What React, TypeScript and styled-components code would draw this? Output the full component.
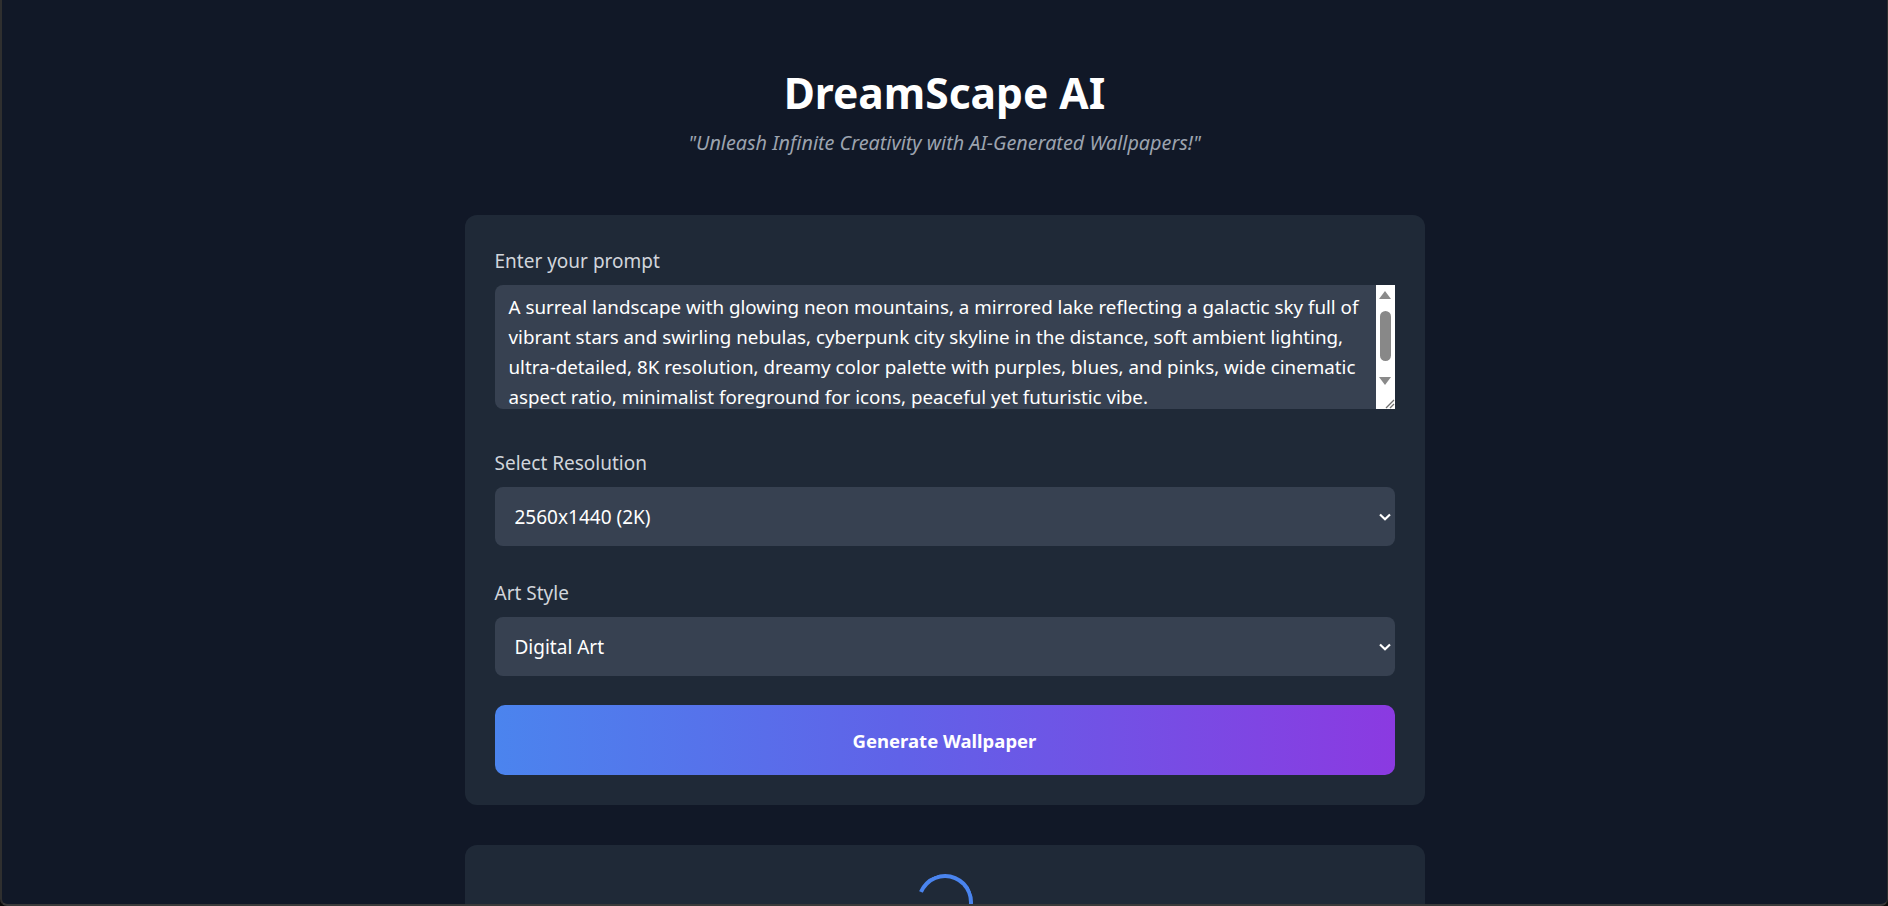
import React, { useEffect, useRef, useState } from "react";
import styled, { createGlobalStyle } from "styled-components";

const GlobalStyle = createGlobalStyle`
  html, body {
    margin: 0;
    padding: 0;
    background: #0b0b0b;
  }
  * { box-sizing: border-box; }
  body {
    font-family: "Noto Sans", "Open Sans", sans-serif;
    overflow: hidden;
  }
`;

const Frame = styled.div`
  height: 100vh;
  border-left: 2px solid #2f2f2f;
  border-right: 1px solid #2f2f2f;
  border-bottom: 2px solid #3a3a3a;
  border-bottom-left-radius: 7px;
  border-bottom-right-radius: 7px;
  background: #111827;
  overflow: hidden;
`;

const Page = styled.main`
  display: flex;
  flex-direction: column;
  align-items: center;
  padding-top: 67px;
`;

const Title = styled.h1`
  margin: 0;
  font-size: 42.5px;
  line-height: 52px;
  font-weight: 700;
  color: #ffffff;
`;

const Tagline = styled.p`
  margin: 10px 0 0;
  font-size: 19.8px;
  line-height: 28px;
  font-style: italic;
  color: #9ca3af;
`;

const Card = styled.section<{ $top: number; $minHeight?: number }>`
  width: 960px;
  margin-top: ${(p) => p.$top}px;
  background: #1f2937;
  border-radius: 12px;
  padding: 32px 30px 30px;
  min-height: ${(p) => (p.$minHeight ? `${p.$minHeight}px` : "auto")};
`;

const LoaderCard = styled(Card)`
  padding-top: 29px;
  display: flex;
  justify-content: center;
`;

const Field = styled.div<{ $gap: number }>`
  display: flex;
  flex-direction: column;
  margin-bottom: ${(p) => p.$gap}px;
`;

const Label = styled.label`
  font-size: 19px;
  line-height: 28px;
  color: #d1d5db;
  margin-bottom: 10px;
`;

const PromptWrap = styled.div`
  position: relative;
  width: 100%;
  height: 124px;
`;

const PromptBox = styled.textarea`
  display: block;
  width: 100%;
  height: 100%;
  padding: 12px 26px 12px 14px;
  background: #374151;
  color: #ffffff;
  border: none;
  outline: none;
  border-radius: 8px;
  font-family: "Noto Sans", "Open Sans", sans-serif;
  font-size: 18.8px;
  line-height: 30px;
  resize: none;
  overflow: hidden;
`;

const ScrollBar = styled.div`
  position: absolute;
  top: 0;
  right: 0;
  bottom: 0;
  width: 19px;
  background: #ffffff;
  display: flex;
  flex-direction: column;
  align-items: center;
  pointer-events: none;
`;

const ArrowSlot = styled.div<{ $h: number }>`
  height: ${(p) => p.$h}px;
  width: 100%;
  display: flex;
  align-items: center;
  justify-content: center;
  flex: none;
`;

const Track = styled.div`
  flex: 1;
  width: 100%;
  display: flex;
  justify-content: center;
`;

const Thumb = styled.div`
  margin-top: 6px;
  width: 11px;
  height: 50px;
  border-radius: 6px;
  background: #888888;
`;

const Resizer = styled.div`
  margin-top: 3px;
  height: 17px;
  width: 100%;
  display: flex;
  align-items: flex-end;
  justify-content: flex-end;
  flex: none;
`;

const SelectWrap = styled.div`
  position: relative;
  width: 100%;
`;

const Select = styled.select`
  display: block;
  width: 100%;
  height: 59px;
  padding: 0 40px 0 20px;
  appearance: none;
  -webkit-appearance: none;
  background: #374151;
  color: #ffffff;
  border: none;
  outline: none;
  border-radius: 8px;
  font-family: "Noto Sans", "Open Sans", sans-serif;
  font-size: 19px;
`;

const Chevron = styled.svg`
  position: absolute;
  right: 3px;
  top: 50%;
  transform: translateY(-50%);
  pointer-events: none;
`;

const GenerateButton = styled.button`
  display: block;
  width: 100%;
  height: 70px;
  border: none;
  border-radius: 10px;
  background: linear-gradient(90deg, #4b84ee 0%, #6062e8 45%, #8b3ae1 100%);
  color: #ffffff;
  font-family: "Noto Sans", "Open Sans", sans-serif;
  font-size: 18.5px;
  font-weight: 700;
  cursor: pointer;
`;

const Spinner = styled.div`
  width: 56px;
  height: 56px;
  border-radius: 50%;
  border: 4px solid #4a84ee;
  border-left-color: transparent;
  transform: rotate(-22deg);
`;

const resolutions = ["1920x1080 (Full HD)", "2560x1440 (2K)", "3840x2160 (4K)"];

const styles = ["Digital Art", "Photorealistic", "Anime", "Oil Painting", "Watercolor"];

const PROMPT =
  "A surreal landscape with glowing neon mountains, a mirrored lake reflecting a galactic sky full of vibrant stars and swirling nebulas, cyberpunk city skyline in the distance, soft ambient lighting, ultra-detailed, 8K resolution, dreamy color palette with purples, blues, and pinks, wide cinematic aspect ratio, minimalist foreground for icons, peaceful yet futuristic vibe.";

function DownChevron() {
  return (
    <Chevron width="14" height="10" viewBox="0 0 14 10">
      <path d="M2 2.5 L7 7.2 L12 2.5" fill="none" stroke="#ffffff" strokeWidth="2.2" />
    </Chevron>
  );
}

function FakeScrollbar() {
  return (
    <ScrollBar aria-hidden="true">
      <ArrowSlot $h={20}>
        <svg width="12" height="8" viewBox="0 0 12 8">
          <polygon points="6,0 12,8 0,8" fill="#8a8a8a" />
        </svg>
      </ArrowSlot>
      <Track>
        <Thumb />
      </Track>
      <ArrowSlot $h={17}>
        <svg width="12" height="8" viewBox="0 0 12 8">
          <polygon points="0,0 12,0 6,8" fill="#8a8a8a" />
        </svg>
      </ArrowSlot>
      <Resizer>
        <svg width="17" height="17" viewBox="0 0 17 17">
          <path d="M16 8 L8 16 M16 12 L12 16" stroke="#6f6f6f" strokeWidth="1.3" fill="none" />
        </svg>
      </Resizer>
    </ScrollBar>
  );
}

export default function App() {
  const [prompt, setPrompt] = useState(PROMPT);
  const [resolution, setResolution] = useState("2560x1440 (2K)");
  const [style, setStyle] = useState("Digital Art");
  const areaRef = useRef<HTMLTextAreaElement>(null);

  useEffect(() => {
    if (areaRef.current) areaRef.current.scrollTop = 5;
  }, []);

  return (
    <>
      <GlobalStyle />
      <Frame>
        <Page>
          <Title>DreamScape AI</Title>
          <Tagline>"Unleash Infinite Creativity with AI-Generated Wallpapers!"</Tagline>

          <Card $top={58}>
            <Field $gap={40}>
              <Label htmlFor="prompt">Enter your prompt</Label>
              <PromptWrap>
                <PromptBox
                  id="prompt"
                  ref={areaRef}
                  value={prompt}
                  onChange={(e) => setPrompt(e.target.value)}
                />
                <FakeScrollbar />
              </PromptWrap>
            </Field>

            <Field $gap={33}>
              <Label htmlFor="resolution">Select Resolution</Label>
              <SelectWrap>
                <Select
                  id="resolution"
                  value={resolution}
                  onChange={(e) => setResolution(e.target.value)}
                >
                  {resolutions.map((r) => (
                    <option key={r} value={r}>
                      {r}
                    </option>
                  ))}
                </Select>
                <DownChevron />
              </SelectWrap>
            </Field>

            <Field $gap={29}>
              <Label htmlFor="style">Art Style</Label>
              <SelectWrap>
                <Select id="style" value={style} onChange={(e) => setStyle(e.target.value)}>
                  {styles.map((s) => (
                    <option key={s} value={s}>
                      {s}
                    </option>
                  ))}
                </Select>
                <DownChevron />
              </SelectWrap>
            </Field>

            <GenerateButton type="button">Generate Wallpaper</GenerateButton>
          </Card>

          <LoaderCard $top={40} $minHeight={200}>
            <Spinner />
          </LoaderCard>
        </Page>
      </Frame>
    </>
  );
}
